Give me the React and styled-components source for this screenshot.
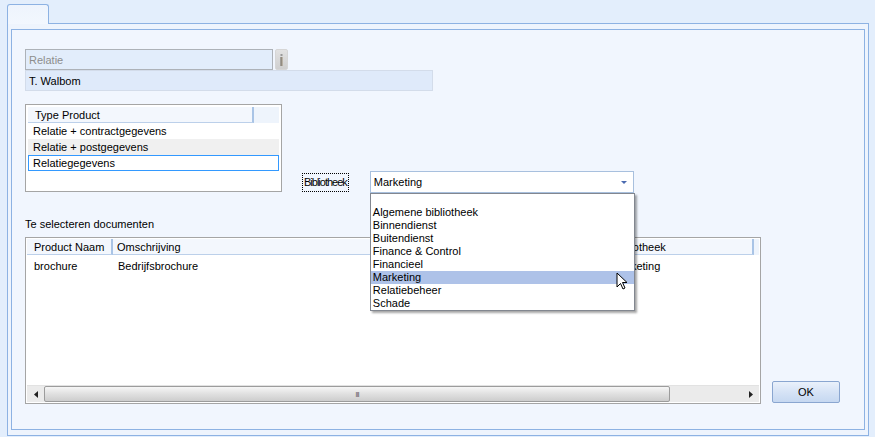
import React from 'react'
import styled, { createGlobalStyle } from 'styled-components'

const GlobalStyle = createGlobalStyle`
  html, body { margin: 0; padding: 0; }
  body {
    font-family: "Liberation Sans", Arial, sans-serif;
    font-size: 11px;
    color: #000;
    background: #e3eefc;
  }
`

const Page = styled.div`
  width: 875px;
  height: 437px;
  box-sizing: border-box;
  padding: 4px 6px 1px 7px;
  display: flex;
  flex-direction: column;
  background: #e3eefc;
`

const TabStrip = styled.div`
  display: flex;
  height: 19px;
`

const Tab = styled.div`
  width: 42px;
  height: 20px;
  box-sizing: border-box;
  border: 1px solid #8db2e3;
  border-bottom: none;
  border-radius: 3px 3px 0 0;
  background: linear-gradient(#eef4fd, #f2f7fe);
  position: relative;
  z-index: 1;
`

const TabPanel = styled.div`
  flex: 1;
  box-sizing: border-box;
  border: 1px solid #8db2e3;
  background: #eef4fd;
  padding: 5px 3px 5px 3px;
  display: flex;
`

const Inner = styled.div`
  flex: 1;
  box-sizing: border-box;
  border: 1px solid #8db2e3;
  background: #f1f6fe;
  padding: 19px 0 0 13px;
  display: flex;
  flex-direction: column;
`

const Row = styled.div`
  display: flex;
  align-items: ${p => p.$align || 'center'};
  margin-top: ${p => p.$mt || 0}px;
`

const Field = styled.div`
  width: ${p => p.$w}px;
  height: ${p => p.$h || 21}px;
  box-sizing: border-box;
  border: 1px solid ${p => (p.$disabled ? '#adb2b8' : '#d3dcea')};
  background: ${p => (p.$disabled ? '#e2edfb' : '#dfeafa')};
  color: ${p => (p.$disabled ? '#8d8d8d' : '#000')};
  padding: 0 3px;
  display: flex;
  align-items: center;
`

const InfoButton = styled.div`
  width: 13px;
  height: 21px;
  margin-left: 2px;
  box-sizing: border-box;
  border: 1px solid #d6d6d6;
  border-radius: 2px;
  background: linear-gradient(#e2e2e2, #cfcfcf);
  display: flex;
  align-items: center;
  justify-content: center;
`

const ListBox = styled.div`
  width: 257px;
  height: 88px;
  box-sizing: border-box;
  border: 1px solid #a5a5a5;
  background: #fff;
  padding: 2px 2px;
`

const HeaderRow = styled.div`
  display: flex;
  height: 16px;
  background: #eef4fc;
`

const HeaderCell = styled.div`
  width: ${p => p.$w}px;
  flex: ${p => (p.$w ? 'none' : 1)};
  box-sizing: border-box;
  padding-left: ${p => p.$pl || 4}px;
  display: flex;
  align-items: center;
  border-right: ${p => (p.$last ? 'none' : '2px solid #a9c4e6')};
  border-bottom: ${p => (p.$last ? 'none' : '1px solid #bcd0ea')};
  background: ${p => (p.$last ? '#eef4fc' : '#f3f7fd')};
`

const ListItem = styled.div`
  height: 16px;
  box-sizing: border-box;
  padding-left: 4px;
  display: flex;
  align-items: center;
  background: ${p => (p.$alt ? '#f0f0f0' : '#fff')};
  border: 1px solid ${p => (p.$focus ? '#3399ff' : 'transparent')};
`

const ComboArea = styled.div`
  display: flex;
  align-items: center;
  margin-left: 20px;
  margin-bottom: -1px;
`

const FocusLabel = styled.span`
  border: 1px dotted #000;
  padding: 2px 1px;
  line-height: 13px;
  letter-spacing: -1px;
`

const ComboWrap = styled.div`
  position: relative;
  margin-left: 21px;
`

const Combo = styled.div`
  width: 264px;
  height: 22px;
  box-sizing: border-box;
  border: 1px solid #a8c0de;
  background: #fff;
  display: flex;
  align-items: center;
  justify-content: space-between;
  padding: 0 6px 0 3px;
`

const Arrow = styled.span`
  width: 0;
  height: 0;
  border-left: 3px solid transparent;
  border-right: 3px solid transparent;
  border-top: 3px solid #4a6ab0;
`

const DropDown = styled.div`
  position: absolute;
  top: 22px;
  left: 0;
  width: 265px;
  box-sizing: border-box;
  border: 1px solid #828790;
  background: #fff;
  box-shadow: 2px 2px 2px rgba(0, 0, 0, 0.35);
  padding-top: 12px;
  z-index: 5;
`

const DropItem = styled.div`
  height: 13px;
  line-height: 13px;
  padding-left: 2px;
  background: ${p => (p.$sel ? '#aec2e8' : 'transparent')};
  position: relative;
`

const Cursor = styled.svg`
  position: absolute;
  right: 5px;
  top: 1px;
`

const SectionLabel = styled.div`
  margin-top: 26px;
  line-height: 13px;
`

const Bottom = styled.div`
  display: flex;
  align-items: flex-end;
  gap: 11px;
  margin-top: 6px;
`

const Table = styled.div`
  width: 736px;
  height: 167px;
  box-sizing: border-box;
  border: 1px solid #a5a5a5;
  background: #fff;
  padding: 1px;
  display: flex;
  flex-direction: column;
`

const TableBody = styled.div`
  flex: 1;
`

const DataRow = styled.div`
  display: flex;
  height: 16px;
  margin-top: 3px;
  align-items: center;
`

const DataCell = styled.div`
  width: ${p => p.$w}px;
  padding-left: ${p => p.$pl || 6}px;
  box-sizing: border-box;
`

const ScrollBar = styled.div`
  height: 16px;
  display: flex;
  align-items: stretch;
  background: #ebebeb;
  border-top: 1px solid #e2e2e2;
`

const ScrollArrow = styled.div`
  width: 17px;
  display: flex;
  align-items: center;
  justify-content: center;
`

const Thumb = styled.div`
  width: 626px;
  box-sizing: border-box;
  border: 1px solid #9c9c9c;
  border-radius: 2px;
  background: linear-gradient(#f6f6f6, #e0e0e0 50%, #cdcdcd);
  display: flex;
  align-items: center;
  justify-content: center;
  font-size: 8px;
  letter-spacing: -1px;
  color: #6c6c6c;
`

const Track = styled.div`
  flex: 1;
`

const OkButton = styled.button`
  width: 68px;
  height: 22px;
  margin-bottom: 1px;
  box-sizing: border-box;
  border: 1px solid #8aa6d0;
  border-radius: 2px;
  background: linear-gradient(#eaf1fb, #d6e3f6 50%, #c6d8f1);
  font-family: inherit;
  font-size: 11px;
  color: #000;
`

const libraries = [
  'Algemene bibliotheek',
  'Binnendienst',
  'Buitendienst',
  'Finance & Control',
  'Financieel',
  'Marketing',
  'Relatiebeheer',
  'Schade',
]

export default function App() {
  return (
    <>
      <GlobalStyle />
      <Page>
        <TabStrip>
          <Tab />
        </TabStrip>
        <TabPanel>
          <Inner>
            <Row>
              <Field $w={248} $disabled>Relatie</Field>
              <InfoButton>
                <svg width="5" height="14" viewBox="0 0 5 14">
                  <rect x="1.5" y="1" width="2" height="2" fill="#9a9a9a" />
                  <rect x="1.5" y="4" width="2" height="9" fill="#9b8d76" />
                  <rect x="1.5" y="4" width="1" height="9" fill="#8a8a8a" />
                </svg>
              </InfoButton>
            </Row>
            <Row>
              <Field $w={408}>T. Walbom</Field>
            </Row>
            <Row $align="flex-end" $mt={13}>
              <ListBox>
                <HeaderRow>
                  <HeaderCell $w={226} $pl={7}>Type Product</HeaderCell>
                  <HeaderCell $last />
                </HeaderRow>
                <ListItem>Relatie + contractgegevens</ListItem>
                <ListItem $alt>Relatie + postgegevens</ListItem>
                <ListItem $focus>Relatiegegevens</ListItem>
              </ListBox>
              <ComboArea>
                <FocusLabel>Bibliotheek</FocusLabel>
                <ComboWrap>
                  <Combo>
                    <span>Marketing</span>
                    <Arrow />
                  </Combo>
                  <DropDown>
                    {libraries.map(l => (
                      <DropItem key={l} $sel={l === 'Marketing'}>
                        {l}
                        {l === 'Marketing' && (
                          <Cursor width="13" height="19" viewBox="0 0 13 19">
                            <path
                              d="M1 1 L1 15 L4.5 11.5 L7 17 L9 16 L6.5 10.5 L11 10.5 Z"
                              fill="#fff"
                              stroke="#000"
                              strokeWidth="1"
                            />
                          </Cursor>
                        )}
                      </DropItem>
                    ))}
                  </DropDown>
                </ComboWrap>
              </ComboArea>
            </Row>
            <SectionLabel>Te selecteren documenten</SectionLabel>
            <Bottom>
              <Table>
                <HeaderRow>
                  <HeaderCell $w={86} $pl={7}>Product Naam</HeaderCell>
                  <HeaderCell $w={497}>Omschrijving</HeaderCell>
                  <HeaderCell $w={144} $pl={2}>Bibliotheek</HeaderCell>
                  <HeaderCell $last />
                </HeaderRow>
                <TableBody>
                  <DataRow>
                    <DataCell $w={86} $pl={7}>brochure</DataCell>
                    <DataCell $w={497} $pl={5}>Bedrijfsbrochure</DataCell>
                    <DataCell $w={140} $pl={2}>Marketing</DataCell>
                  </DataRow>
                </TableBody>
                <ScrollBar>
                  <ScrollArrow>
                    <svg width="4" height="7" viewBox="0 0 4 7">
                      <path d="M4 0 L0 3.5 L4 7 Z" fill="#222" />
                    </svg>
                  </ScrollArrow>
                  <Thumb>III</Thumb>
                  <Track />
                  <ScrollArrow>
                    <svg width="4" height="7" viewBox="0 0 4 7">
                      <path d="M0 0 L4 3.5 L0 7 Z" fill="#222" />
                    </svg>
                  </ScrollArrow>
                </ScrollBar>
              </Table>
              <OkButton>OK</OkButton>
            </Bottom>
          </Inner>
        </TabPanel>
      </Page>
    </>
  )
}
